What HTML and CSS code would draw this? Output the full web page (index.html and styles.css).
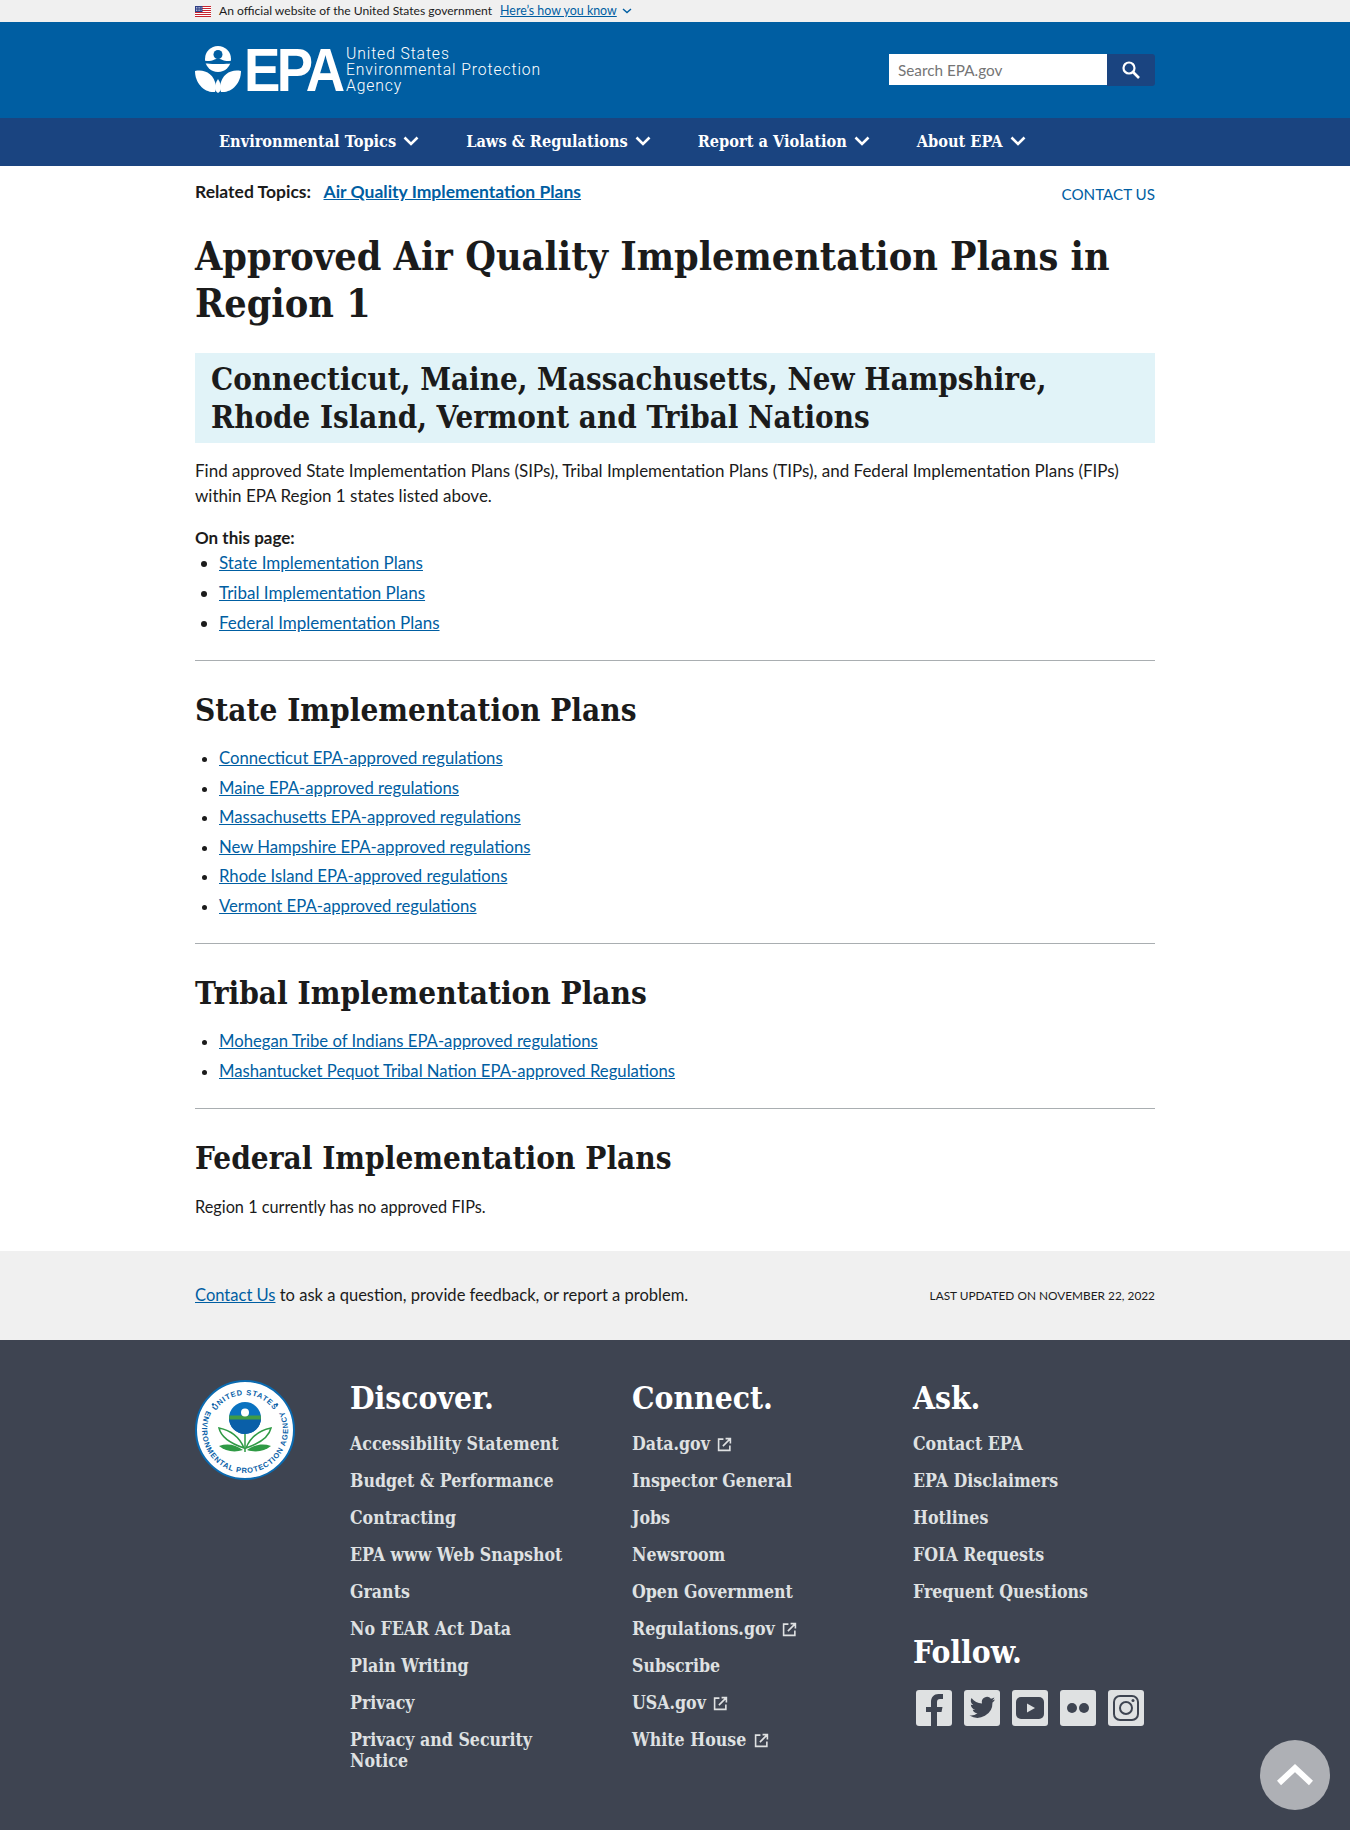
FILE: index.html
```html
<!DOCTYPE html>
<html lang="en">
<head>
    <meta charset="UTF-8">
    <meta name="viewport" content="width=device-width, initial-scale=1.0">
    <title>Approved Air Quality Implementation Plans in Region 1 | US EPA</title>
    <link rel="stylesheet" href="styles.css">
</head>
<body>
    <div class="gov-banner">
        <div class="wrap gov-inner">
            <svg class="flag" viewBox="0 0 16 11">
                <rect width="16" height="11" fill="#fff"/>
                <path d="M0 .5h16M0 2.5h16M0 4.5h16M0 6.5h16M0 8.5h16M0 10.5h16" stroke="#c8242f" stroke-width="1"/>
                <rect width="7.5" height="6" fill="#2e3f85"/>
                <path d="M1 1.5h5.5M1 3h5.5M1 4.5h5.5" stroke="#dfe3f2" stroke-width=".7" stroke-dasharray="1 .6"/>
            </svg>
            <span class="gov-text">An official website of the United States government</span>
            <a href="#">Here’s how you know</a>
            <svg class="gov-chev" viewBox="0 0 10 6"><path d="M1 1l4 3.6L9 1" fill="none" stroke="#005ea2" stroke-width="1.4"/></svg>
        </div>
    </div>

    <header class="site-header">
        <div class="wrap header-inner">
            <a class="logo" href="#">
                <svg class="logo-mark" viewBox="0 0 46 47">
                    <circle cx="23" cy="13" r="13" fill="#fff"/>
                    <circle cx="23" cy="8.500" r="4.500" fill="#005ea2"/>
                    <path d="M5 14c5 1.500 11 1.500 14.500-.5 2-1 5-1 7 0C30 15.500 36 15.500 41 14v2.500c-5 2-31 2-36 0z" fill="#005ea2"/>
                    <path d="M0 25c9-2 19 2 21 15 0 2-.5 4-1 6C9 47 0 37 0 25z" fill="#fff"/>
                    <path d="M46 25c-9-2-19 2-21 15 0 2 .5 4 1 6 11 1 20-9 20-21z" fill="#fff"/>
                    <path d="M23 33c2 3 3 6 3 9 0 2-1 4-3 5-2-1-3-3-3-5 0-3 1-6 3-9z" fill="#fff"/>
                </svg>
                <span class="logo-epa">EPA</span>
                <span class="logo-name">United States<br>Environmental Protection<br>Agency</span>
            </a>
            <form class="search">
                <input type="text" placeholder="Search EPA.gov">
                <button type="button" aria-label="Search">
                    <svg viewBox="0 0 20 20"><circle cx="8" cy="8" r="5.5" fill="none" stroke="#fff" stroke-width="2.2"/><path d="M12 12l6 6" stroke="#fff" stroke-width="2.6"/></svg>
                </button>
            </form>
        </div>
    </header>

    <nav class="main-nav">
        <div class="wrap nav-inner">
            <a href="#">Environmental Topics <svg viewBox="0 0 16 10"><path d="M1.5 1.5L8 8l6.500-6.500" fill="none" stroke="#fff" stroke-width="2.600"/></svg></a>
            <a href="#">Laws &amp; Regulations <svg viewBox="0 0 16 10"><path d="M1.5 1.5L8 8l6.500-6.500" fill="none" stroke="#fff" stroke-width="2.600"/></svg></a>
            <a href="#">Report a Violation <svg viewBox="0 0 16 10"><path d="M1.5 1.5L8 8l6.500-6.500" fill="none" stroke="#fff" stroke-width="2.600"/></svg></a>
            <a href="#">About EPA <svg viewBox="0 0 16 10"><path d="M1.5 1.5L8 8l6.500-6.500" fill="none" stroke="#fff" stroke-width="2.600"/></svg></a>
        </div>
    </nav>

    <main class="wrap content">
        <div class="related">
            <div><strong>Related Topics:</strong> <a class="related-link" href="#">Air Quality Implementation Plans</a></div>
            <a class="contact-top" href="#">CONTACT US</a>
        </div>

        <h1>Approved Air Quality Implementation Plans in Region 1</h1>

        <div class="box-title">Connecticut, Maine, Massachusetts, New Hampshire, Rhode Island, Vermont and Tribal Nations</div>

        <p class="intro">Find approved State Implementation Plans (SIPs), Tribal Implementation Plans (TIPs), and Federal Implementation Plans (FIPs) within EPA Region 1 states listed above.</p>

        <p class="on-page"><strong>On this page:</strong></p>
        <ul class="toc">
            <li><a href="#">State Implementation Plans</a></li>
            <li><a href="#">Tribal Implementation Plans</a></li>
            <li><a href="#">Federal Implementation Plans</a></li>
        </ul>

        <hr>
        <h2>State Implementation Plans</h2>
        <ul class="links">
            <li><a href="#">Connecticut EPA-approved regulations</a></li>
            <li><a href="#">Maine EPA-approved regulations</a></li>
            <li><a href="#">Massachusetts EPA-approved regulations</a></li>
            <li><a href="#">New Hampshire EPA-approved regulations</a></li>
            <li><a href="#">Rhode Island EPA-approved regulations</a></li>
            <li><a href="#">Vermont EPA-approved regulations</a></li>
        </ul>

        <hr>
        <h2>Tribal Implementation Plans</h2>
        <ul class="links">
            <li><a href="#">Mohegan Tribe of Indians EPA-approved regulations</a></li>
            <li><a href="#">Mashantucket Pequot Tribal Nation EPA-approved Regulations</a></li>
        </ul>

        <hr>
        <h2>Federal Implementation Plans</h2>
        <p class="no-fips">Region 1 currently has no approved FIPs.</p>
    </main>

    <div class="feedback">
        <div class="wrap feedback-inner">
            <div class="feedback-text"><a href="#">Contact Us</a> to ask a question, provide feedback, or report a problem.</div>
            <div class="updated">LAST UPDATED ON NOVEMBER 22, 2022</div>
        </div>
    </div>

    <footer class="site-footer">
        <div class="wrap footer-inner">
            <svg class="seal" viewBox="0 0 100 100">
                <defs>
                    <path id="seal-top" d="M15 50a35 35 0 0 1 70 0"/>
                    <path id="seal-bottom" d="M11 31.800A43 43 0 1 0 89 31.800"/>
                </defs>
                <circle cx="50" cy="50" r="49" fill="#fff" stroke="#0a6ab0" stroke-width="2"/>
                <text class="seal-text"><textPath href="#seal-top" startOffset="50%" text-anchor="middle">UNITED STATES</textPath></text>
                <text class="seal-text"><textPath href="#seal-bottom" startOffset="50%" text-anchor="middle">ENVIRONMENTAL PROTECTION AGENCY</textPath></text>
                <circle cx="18" cy="24.500" r="1.200" fill="#0a5fa8"/>
                <circle cx="82" cy="24.500" r="1.200" fill="#0a5fa8"/>
                <circle cx="50" cy="38" r="16" fill="#0a72c0"/>
                <path d="M34 38h32a16 16 0 0 1-32 0z" fill="#0a5fa8"/>
                <rect x="34.200" y="35.500" width="31.600" height="4" fill="#3f9c46"/>
                <circle cx="50" cy="32.500" r="4" fill="#fff"/>
                <path d="M50 72V54" stroke="#2f9a45" stroke-width="1.500"/>
                <path d="M49 68C44 56 34 50 24 48c2 9 10 15 25 20z" fill="#fff" stroke="#2f9a45" stroke-width="1.500"/>
                <path d="M51 68c5-12 15-18 25-20-2 9-10 15-25 20z" fill="#fff" stroke="#2f9a45" stroke-width="1.500"/>
                <path d="M48 70c-7-5-15-7-24-4 6 5 15 7 24 4z" fill="#2f9a45"/>
                <path d="M52 70c7-5 15-7 24-4-6 5-15 7-24 4z" fill="#2f9a45"/>
            </svg>

            <div class="footer-col">
                <h3>Discover.</h3>
                <ul>
                    <li><a href="#">Accessibility Statement</a></li>
                    <li><a href="#">Budget &amp; Performance</a></li>
                    <li><a href="#">Contracting</a></li>
                    <li><a href="#">EPA www Web Snapshot</a></li>
                    <li><a href="#">Grants</a></li>
                    <li><a href="#">No FEAR Act Data</a></li>
                    <li><a href="#">Plain Writing</a></li>
                    <li><a href="#">Privacy</a></li>
                    <li><a href="#">Privacy and Security Notice</a></li>
                </ul>
            </div>

            <div class="footer-col">
                <h3>Connect.</h3>
                <ul>
                    <li><a href="#">Data.gov</a> <svg class="ext" viewBox="0 0 14 14"><path d="M6 2H1.500v10.500H12V8M5.500 8.500L12 2M8 1.500h4.500V6" fill="none" stroke="#dfe1e2" stroke-width="1.500"/></svg></li>
                    <li><a href="#">Inspector General</a></li>
                    <li><a href="#">Jobs</a></li>
                    <li><a href="#">Newsroom</a></li>
                    <li><a href="#">Open Government</a></li>
                    <li><a href="#">Regulations.gov</a> <svg class="ext" viewBox="0 0 14 14"><path d="M6 2H1.500v10.500H12V8M5.500 8.500L12 2M8 1.500h4.500V6" fill="none" stroke="#dfe1e2" stroke-width="1.500"/></svg></li>
                    <li><a href="#">Subscribe</a></li>
                    <li><a href="#">USA.gov</a> <svg class="ext" viewBox="0 0 14 14"><path d="M6 2H1.500v10.500H12V8M5.500 8.500L12 2M8 1.500h4.500V6" fill="none" stroke="#dfe1e2" stroke-width="1.500"/></svg></li>
                    <li><a href="#">White House</a> <svg class="ext" viewBox="0 0 14 14"><path d="M6 2H1.500v10.500H12V8M5.500 8.500L12 2M8 1.500h4.500V6" fill="none" stroke="#dfe1e2" stroke-width="1.500"/></svg></li>
                </ul>
            </div>

            <div class="footer-col">
                <h3>Ask.</h3>
                <ul>
                    <li><a href="#">Contact EPA</a></li>
                    <li><a href="#">EPA Disclaimers</a></li>
                    <li><a href="#">Hotlines</a></li>
                    <li><a href="#">FOIA Requests</a></li>
                    <li><a href="#">Frequent Questions</a></li>
                </ul>
                <h3 class="follow">Follow.</h3>
                <div class="social">
                    <svg viewBox="0 0 36 36"><rect width="36" height="36" rx="3" fill="#dfe1e2"/><path d="M15 36V22h-5v-5h5v-5c0-5 3-8 7.500-8H27v5h-3c-2 0-3 1-3 3v5h5.500l-1 5H21v14z" fill="#3e4451"/></svg>
                    <svg viewBox="0 0 36 36"><rect width="36" height="36" rx="3" fill="#dfe1e2"/><path d="M31 9.500c-1 .5-2 .8-3 1 1-.7 2-1.800 2.300-3-1 .6-2.200 1-3.300 1.300a5.200 5.200 0 0 0-9 4.700C13.800 13.300 10 11.300 7.500 8c-1.400 2.400-.7 5.400 1.600 7-.8 0-1.600-.2-2.300-.6 0 2.500 1.800 4.700 4.200 5.200-.8.200-1.600.2-2.300.1.600 2 2.600 3.500 4.800 3.600A10.500 10.500 0 0 1 5.500 25.500 15 15 0 0 0 28.500 12.500c1-.8 1.900-1.800 2.500-3z" fill="#3e4451"/></svg>
                    <svg viewBox="0 0 36 36"><rect width="36" height="36" rx="3" fill="#dfe1e2"/><rect x="4" y="7" width="28" height="22" rx="5" fill="#3e4451"/><path d="M15 13.500l8 4.500-8 4.500z" fill="#dfe1e2"/></svg>
                    <svg viewBox="0 0 36 36"><rect width="36" height="36" rx="3" fill="#dfe1e2"/><circle cx="12" cy="18" r="5" fill="#3e4451"/><circle cx="24" cy="18" r="5" fill="#3e4451"/></svg>
                    <svg viewBox="0 0 36 36"><rect width="36" height="36" rx="3" fill="#dfe1e2"/><rect x="6" y="6" width="24" height="24" rx="6" fill="none" stroke="#3e4451" stroke-width="2"/><circle cx="18" cy="18" r="6" fill="none" stroke="#3e4451" stroke-width="2"/><circle cx="25" cy="10.500" r="1.500" fill="#3e4451"/></svg>
                </div>
            </div>
        </div>
        <a class="to-top" href="#" aria-label="Back to top">
            <svg viewBox="0 0 36 24"><path d="M2 20L18 5l16 15" fill="none" stroke="#fff" stroke-width="6"/></svg>
        </a>
    </footer>
</body>
</html>
```

FILE: styles.css
```css
* {
    box-sizing: border-box;
}

body {
    display: flex;
    flex-direction: column;
    min-height: 100vh;
    margin: 0;
    font-family: "Lato", "Liberation Sans", sans-serif;
    font-size: 17px;
    line-height: 25px;
    color: #1b1b1b;
    background-color: #fff;
}

a {
    color: #005ea2;
}

.wrap {
    width: 960px;
    margin: 0 auto;
}

/* gov banner */
.gov-banner {
    height: 22px;
    background-color: #f0f0f0;
    font-size: 12.4px;
    line-height: 22px;
}

.gov-inner {
    display: flex;
    align-items: center;
}

.gov-text {
    font-size: 12.1px;
}

.flag {
    width: 16px;
    height: 11px;
    margin-right: 8px;
}

.gov-inner a {
    margin-left: 8px;
}

.gov-chev {
    width: 10px;
    height: 6px;
    margin-left: 5px;
}

/* header */
.site-header {
    height: 96px;
    background-color: #005ea2;
}

.header-inner {
    display: flex;
    justify-content: space-between;
    align-items: center;
    height: 100%;
}

.logo {
    display: flex;
    align-items: center;
    color: #fff;
    text-decoration: none;
}

.logo-mark {
    width: 46px;
    height: 47px;
}

.logo-epa {
    width: 102px;
    margin-left: 3px;
    font-family: "Liberation Sans", sans-serif;
    font-weight: 700;
    font-size: 62px;
    line-height: 47px;
    letter-spacing: -4px;
    transform: scaleX(.88);
    transform-origin: left center;
}

.logo-name {
    font-family: "Roboto", sans-serif;
    font-weight: 300;
    font-size: 15.700px;
    line-height: 16.300px;
    letter-spacing: .9px;
}

.search {
    display: flex;
}

.search input {
    width: 218px;
    height: 31px;
    padding: 0 9px;
    border: 0;
    font-family: inherit;
    font-size: 15.300px;
}

.search input::placeholder {
    color: #757575;
}

.search button {
    width: 48px;
    height: 32px;
    border: 0;
    border-radius: 0 3px 3px 0;
    background-color: #1a4480;
    display: flex;
    align-items: center;
    justify-content: center;
}

.search button svg {
    width: 20px;
    height: 20px;
}

/* nav */
.main-nav {
    height: 48px;
    padding-bottom: 2px;
    background-color: #1a4480;
}

.nav-inner {
    display: flex;
    height: 100%;
    align-items: center;
    gap: 47px;
    padding-left: 24px;
}

.nav-inner a {
    display: flex;
    align-items: center;
    gap: 7px;
    color: #fff;
    font-family: "DejaVu Serif", serif;
    font-stretch: condensed;
    font-weight: 700;
    font-size: 16.200px;
    text-decoration: none;
}

.nav-inner svg {
    width: 16px;
    height: 10px;
}

/* content */
.related {
    display: flex;
    justify-content: space-between;
    padding-top: 13px;
    font-size: 17.500px;
}

.related-link {
    margin-left: 8px;
    font-weight: 700;
}

.contact-top {
    padding-top: 3px;
    font-size: 15.200px;
    text-decoration: none;
}

h1, h2, .box-title, .footer-col h3 {
    font-family: "DejaVu Serif", serif;
    font-stretch: condensed;
    font-weight: 700;
    color: #1b1b1b;
}

h1 {
    margin: 26px 0 26px;
    font-size: 39.200px;
    line-height: 47px;
}

.box-title {
    padding: 7px 16px;
    background-color: #e1f3f8;
    font-size: 31px;
    line-height: 38px;
}

.intro {
    margin: 15px 0 0;
}

.on-page {
    margin: 17px 0 0;
}

ul {
    margin: 0;
    padding-left: 24px;
}

.toc {
    margin-bottom: 25px;
}

.toc li {
    margin-bottom: 5px;
}

.links {
    font-size: 16.700px;
}

.links li {
    margin-bottom: 4.600px;
}

hr {
    height: 1px;
    margin: 24px 0 0;
    border: 0;
    background-color: #a9aeb1;
}

h2 {
    margin: 29px 0 16px;
    font-size: 31.250px;
    line-height: 40px;
}

.no-fips {
    margin: 0 0 32px;
    font-size: 16.300px;
}

/* feedback strip */
.feedback {
    height: 89px;
    background-color: #f0f0f0;
}

.feedback-inner {
    display: flex;
    justify-content: space-between;
    align-items: center;
    height: 100%;
}

.feedback-text {
    font-size: 16.550px;
}

.updated {
    font-size: 11.850px;
}

/* footer */
.site-footer {
    position: relative;
    flex: 1;
    padding-top: 34px;
    background-color: #3e4451;
}

.footer-inner {
    display: grid;
    grid-template-columns: 155px 282px 281px 1fr;
}

.seal {
    width: 100px;
    height: 100px;
    margin-top: 6px;
}

.seal-text {
    font-family: "Liberation Sans", sans-serif;
    font-weight: 700;
    font-size: 7.500px;
    letter-spacing: .8px;
    fill: #0a5fa8;
}

.footer-col h3 {
    margin: 0 0 11px;
    color: #fff;
    font-size: 31.500px;
    line-height: 48px;
}

.footer-col ul {
    padding: 0;
    list-style: none;
}

.footer-col li {
    width: 235px;
    margin-bottom: 16px;
    color: #dfe1e2;
    font-family: "DejaVu Serif", serif;
    font-stretch: condensed;
    font-weight: 700;
    font-size: 17.600px;
    line-height: 21px;
}

.footer-col li a {
    color: #dfe1e2;
    text-decoration: none;
}

.ext {
    width: 15px;
    height: 15px;
    margin-left: 2px;
    vertical-align: -2px;
}

.footer-col .follow {
    margin: 26px 0 14px;
}

.social {
    display: flex;
    gap: 12px;
    padding-left: 3px;
}

.social svg {
    width: 36px;
    height: 36px;
}

.to-top {
    position: absolute;
    right: 20px;
    bottom: 20px;
    display: flex;
    align-items: center;
    justify-content: center;
    width: 70px;
    height: 70px;
    border-radius: 50%;
    background-color: #aeb0b5;
}

.to-top svg {
    width: 36px;
    height: 24px;
}
```
